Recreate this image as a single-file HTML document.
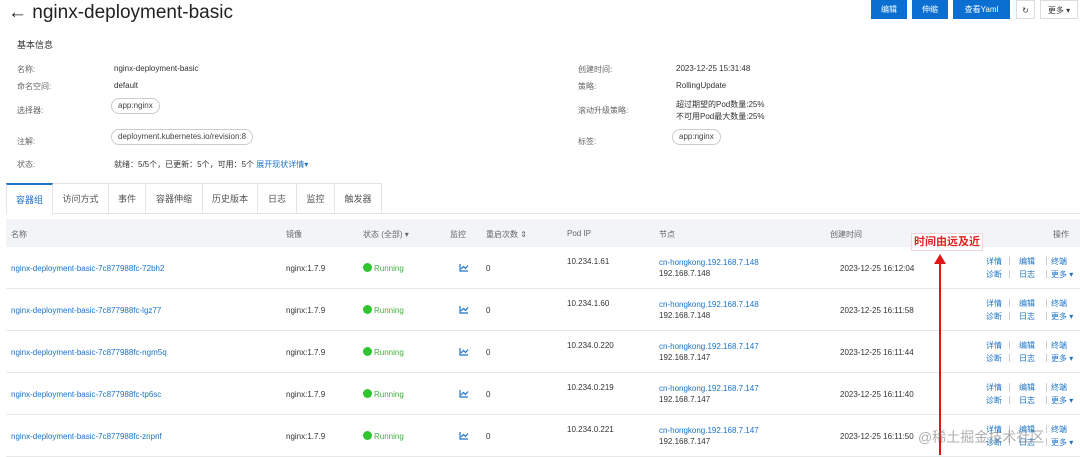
<!DOCTYPE html>
<html><head><meta charset="utf-8"><style>
*{margin:0;padding:0;box-sizing:border-box}
body{width:1080px;height:455px;overflow:hidden;background:#fff;font-family:"Liberation Sans","Noto Sans CJK SC",sans-serif;color:#333;font-size:8px;position:relative}
.a{position:absolute;white-space:nowrap}
.lbl{color:#666}
.tag{position:absolute;border:1px solid #ccc;border-radius:9px;height:16px;line-height:14px;padding:0 6px;font-size:8px;color:#444}
.btn{position:absolute;top:0;height:19px;line-height:19px;text-align:center;color:#fff;background:#0a6fd0;font-size:8px}
.wbtn{position:absolute;top:0;height:19px;line-height:19px;text-align:center;border:1px solid #ddd;background:#fff;color:#333;font-size:8px}
.tab{position:absolute;top:183px;height:31px;line-height:31px;text-align:center;border:1px solid #e4e4e4;border-left:none;font-size:9px;color:#555;background:#fff}
.blue{color:#1a73c8}
.green{color:#3bb33b}
.dot{display:inline-block;width:9px;height:9px;border-radius:50%;background:#2ec52e;vertical-align:-1px;margin-right:2px}
.line{position:absolute;left:6px;right:0;height:1px;background:#e8e8e8}
.sep{position:absolute;width:1px;height:8px;background:#ccc}
</style></head><body>
<div class="a" style="left:8px;top:2px;font-size:19px;color:#222">← nginx-deployment-basic</div>
<div class="btn" style="left:871px;width:36px">编辑</div>
<div class="btn" style="left:912px;width:36px">伸缩</div>
<div class="btn" style="left:953px;width:57px">查看Yaml</div>
<div class="wbtn" style="left:1016px;width:19px">↻</div>
<div class="wbtn" style="left:1040px;width:38px">更多 ▾</div>

<div class="a" style="left:17px;top:38px;font-size:9px;color:#333">基本信息</div>
<div class="a lbl" style="left:17px;top:64px">名称:</div><div class="a" style="left:114px;top:64px">nginx-deployment-basic</div>
<div class="a lbl" style="left:17px;top:81px">命名空间:</div><div class="a" style="left:114px;top:81px">default</div>
<div class="a lbl" style="left:17px;top:105px">选择器:</div><div class="tag" style="left:111px;top:98px">app:nginx</div>
<div class="a lbl" style="left:17px;top:136px">注解:</div><div class="tag" style="left:111px;top:129px">deployment.kubernetes.io/revision:8</div>
<div class="a lbl" style="left:17px;top:159px">状态:</div><div class="a" style="left:114px;top:159px">就绪：5/5个，已更新：5个，可用：5个 <span class="blue">展开现状详情▾</span></div>

<div class="a lbl" style="left:578px;top:64px">创建时间:</div><div class="a" style="left:676px;top:64px">2023-12-25 15:31:48</div>
<div class="a lbl" style="left:578px;top:81px">策略:</div><div class="a" style="left:676px;top:81px">RollingUpdate</div>
<div class="a lbl" style="left:578px;top:105px">滚动升级策略:</div><div class="a" style="left:676px;top:99px;line-height:12px">超过期望的Pod数量:25%<br>不可用Pod最大数量:25%</div>
<div class="a lbl" style="left:578px;top:136px">标签:</div><div class="tag" style="left:672px;top:129px">app:nginx</div>

<div class="tab" style="left:6px;width:47px;border-left:1px solid #e4e4e4;border-top:2px solid #1a73c8;border-bottom:none;color:#1a73c8">容器组</div>
<div class="tab" style="left:53px;width:56px">访问方式</div>
<div class="tab" style="left:109px;width:37px">事件</div>
<div class="tab" style="left:146px;width:57px">容器伸缩</div>
<div class="tab" style="left:203px;width:55px">历史版本</div>
<div class="tab" style="left:258px;width:39px">日志</div>
<div class="tab" style="left:297px;width:38px">监控</div>
<div class="tab" style="left:335px;width:47px">触发器</div>
<div class="line" style="top:213px;left:382px;background:#e4e4e4"></div>

<div class="a" style="left:6px;top:219px;width:1074px;height:28px;background:#f2f4f7"></div>
<div class="a lbl" style="left:11px;top:229px">名称</div>
<div class="a lbl" style="left:286px;top:229px">镜像</div>
<div class="a lbl" style="left:363px;top:229px">状态 (全部) ▾</div>
<div class="a lbl" style="left:450px;top:229px">监控</div>
<div class="a lbl" style="left:486px;top:229px">重启次数 ⇕</div>
<div class="a lbl" style="left:567px;top:229px">Pod IP</div>
<div class="a lbl" style="left:659px;top:229px">节点</div>
<div class="a lbl" style="left:830px;top:229px">创建时间</div>
<div class="a lbl" style="left:1053px;top:229px">操作</div>

<div id="rows"></div>
<script>
var d=[["72bh2","10.234.1.61","148","16:12:04"],["lgz77","10.234.1.60","148","16:11:58"],["ngm5q","10.234.0.220","147","16:11:44"],["tp6sc","10.234.0.219","147","16:11:40"],["znpnf","10.234.0.221","147","16:11:50"]];
var h="";
d.forEach(function(r,i){var y=247+i*42;var c=y+17;
h+='<div class="line" style="top:'+(y+41)+'px"></div>';
h+='<div class="a blue" style="left:11px;top:'+c+'px">nginx-deployment-basic-7c877988fc-'+r[0]+'</div>';
h+='<div class="a" style="left:286px;top:'+c+'px">nginx:1.7.9</div>';
h+='<div class="a green" style="left:363px;top:'+(c-1)+'px"><span class="dot"></span>Running</div>';
h+='<svg class="a" style="left:459px;top:'+(c-1)+'px" width="10" height="9" viewBox="0 0 10 9"><path d="M1 1V8H9" fill="none" stroke="#1a73c8" stroke-width="1.2"/><path d="M2 6L4.5 3.5L6.5 5.5L9 2.5" fill="none" stroke="#1a73c8" stroke-width="1.2"/></svg>';
h+='<div class="a" style="left:486px;top:'+c+'px">0</div>';
h+='<div class="a" style="left:567px;top:'+(c-7)+'px">'+r[1]+'</div>';
h+='<div class="a" style="left:659px;top:'+(c-7)+'px;line-height:11px"><span class="blue">cn-hongkong.192.168.7.'+r[2]+'</span><br>192.168.7.'+r[2]+'</div>';
h+='<div class="a" style="left:840px;top:'+c+'px">2023-12-25 '+r[3]+'</div>';
var t=c-8,b=c+5;
h+='<div class="a blue" style="left:986px;top:'+t+'px">详情</div><div class="a blue" style="left:1019px;top:'+t+'px">编辑</div><div class="a blue" style="left:1051px;top:'+t+'px">终端</div>';
h+='<div class="a blue" style="left:986px;top:'+b+'px">诊断</div><div class="a blue" style="left:1019px;top:'+b+'px">日志</div><div class="a blue" style="left:1051px;top:'+b+'px">更多 ▾</div>';
h+='<div class="sep" style="left:1009px;top:'+(t+1)+'px"></div><div class="sep" style="left:1046px;top:'+(t+1)+'px"></div><div class="sep" style="left:1009px;top:'+(b+1)+'px"></div><div class="sep" style="left:1046px;top:'+(b+1)+'px"></div>';
});
document.getElementById('rows').innerHTML=h;
</script>
<div class="a" style="left:911px;top:233px;width:72px;height:18px;background:#fff;border:1px solid #f1d6d6;color:#e02020;font-size:11px;font-weight:bold;line-height:16px;text-align:center">时间由远及近</div>
<div class="a" style="left:939px;top:262px;width:2px;height:193px;background:#e01515"></div>
<div class="a" style="left:934px;top:254px;width:0;height:0;border-left:6px solid transparent;border-right:6px solid transparent;border-bottom:10px solid #e01515"></div>
<div class="a" style="left:918px;top:427px;font-size:14px;color:rgba(120,120,120,0.6)">@稀土掘金技术社区</div>
</body></html>
